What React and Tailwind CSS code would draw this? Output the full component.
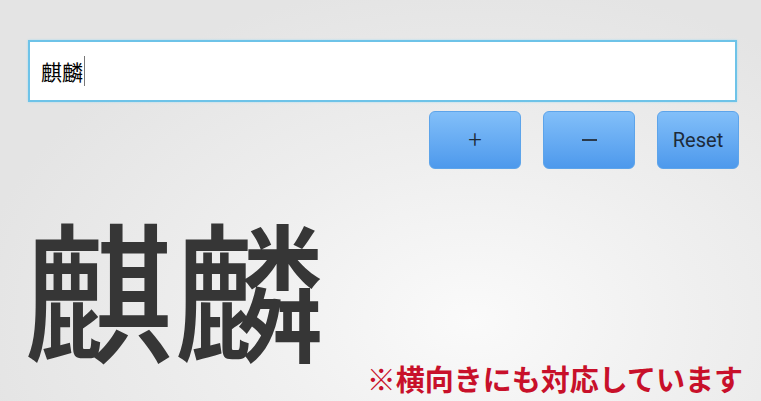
export default function App() {
    return (
        <div
            className="w-[761px] h-[401px] overflow-hidden flex flex-col bg-[radial-gradient(ellipse_at_62%_80%,#fafafa_0%,#efefef_35%,#e4e4e4_75%)]"
            style={{ fontFamily: '"Noto Sans CJK JP", "Noto Sans", sans-serif' }}
        >
            {/* Input */}
            <div className="pt-[40px] pl-[28px]">
                <div className="w-[709px] h-[62px] bg-white border-2 border-[#6ec3e8] shadow-[0_0_2px_#a9dcf2] flex items-center pl-[11px]">
                    <span className="text-[21px] leading-none text-black">麒麟</span>
                    <span className="w-px h-[30px] bg-[#777] ml-[1px]" />
                </div>
            </div>

            {/* Buttons */}
            <div className="flex justify-end gap-[22px] pr-[22px] mt-[9px]">
                <button className="w-[92px] h-[58px] rounded-[6px] border border-[#5da4ea] bg-linear-to-b from-[#82bff9] to-[#4d99ec] text-[#1d2b3a] text-[24px] font-['Roboto'] font-light flex items-center justify-center">
                    +
                </button>
                <button className="w-[92px] h-[58px] rounded-[6px] border border-[#5da4ea] bg-linear-to-b from-[#82bff9] to-[#4d99ec] text-[#1d2b3a] flex items-center justify-center">
                    <span className="w-[15px] h-[2px] bg-[#2a3a4c]" />
                </button>
                <button className="w-[82px] h-[58px] rounded-[6px] border border-[#5da4ea] bg-linear-to-b from-[#82bff9] to-[#4d99ec] text-[#1d2b3a] text-[20px] font-['Roboto'] flex items-center justify-center">
                    Reset
                </button>
            </div>

            {/* Result */}
            <div className="flex-1 flex justify-between items-end pl-[24px] pr-[18px]">
                <div className="text-[150px] leading-none whitespace-nowrap text-[#363636] font-medium mb-[40px]">麒麟</div>
                <div className="text-[29px] leading-none whitespace-nowrap text-[#c8102a] font-bold mb-[8px]">
                    ※横向きにも対応しています
                </div>
            </div>
        </div>
    );
}
